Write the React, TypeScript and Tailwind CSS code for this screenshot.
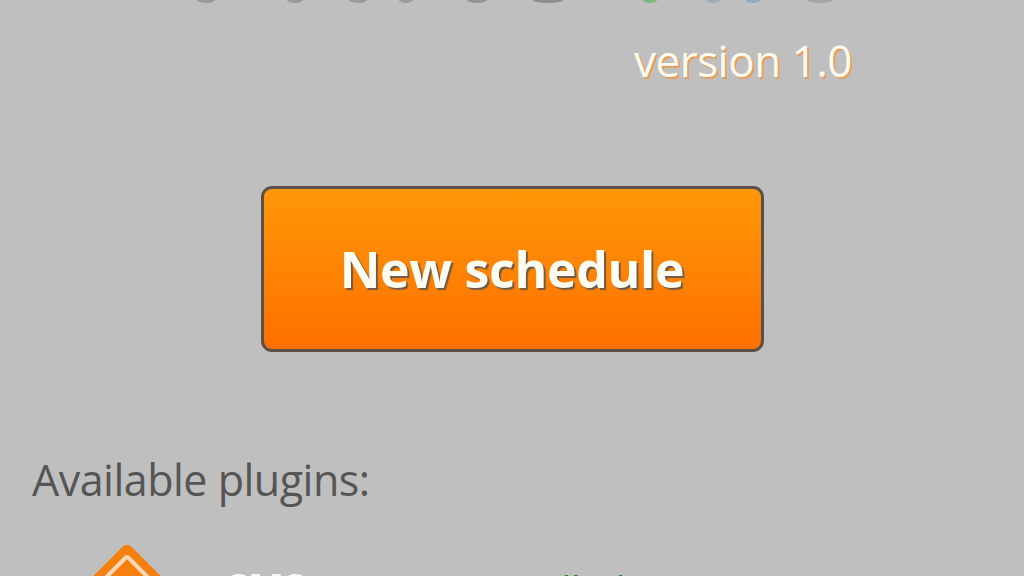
const sans = { fontFamily: '"Open Sans", "Noto Sans", sans-serif' };

// bottoms of the title glyphs, cut off by the top edge of the picture
const titleMarks = [
  [206, 9, "#9a9a9a"],
  [295, 8, "#9c9c9c"],
  [358, 9, "#9c9c9c"],
  [406, 7, "#9c9c9c"],
  [477, 10, "#949494"],
  [548, 15, "#8c8c8c"],
  [650, 7, "#7fb87f"],
  [713, 7, "#9fb0b4"],
  [753, 7, "#93aabb"],
  [820, 13, "#a6a6a6"],
] as const;

function TitleMarks() {
  return (
    <svg width="1024" height="6" viewBox="0 0 1024 6" className="block shrink-0">
      {titleMarks.map(([cx, rx, fill]) => (
        <ellipse key={cx} cx={cx} cy="0" rx={rx} ry="3" fill={fill} />
      ))}
    </svg>
  );
}

function PluginIcon() {
  return (
    <svg width="80" height="80" viewBox="0 0 80 80" className="shrink-0">
      <rect x="14" y="14" width="52" height="52" rx="6" transform="rotate(45 40 40)" fill="#f58010" />
      <rect x="24" y="24" width="32" height="32" rx="2" transform="rotate(45 40 40)" fill="none" stroke="#f8d8b8" strokeWidth="4" />
    </svg>
  );
}

export default function App() {
  return (
    <div className="w-[1024px] h-[576px] overflow-hidden bg-[#bfbfbf] flex flex-col" style={sans}>
      <TitleMarks />

      <div className="flex justify-end pr-[172px] pt-[29px]">
        <span className="text-[44px] leading-[50px] tracking-[-0.5px] text-[#fffaf0] [text-shadow:2px_2px_0_#e0a060]">
          version 1.0
        </span>
      </div>

      <div className="flex justify-center pt-[101px]">
        <button className="w-[503px] h-[166px] rounded-[11px] border-[3px] border-[#5a5048] bg-gradient-to-b from-[#ff9708] to-[#ff6f00] text-[50px] font-bold tracking-[-0.3px] text-[#fffdf2] [text-shadow:2px_2px_1px_#6e5a48]">
          New schedule
        </button>
      </div>

      <div className="pl-[32px] pt-[100px] text-[43px] leading-[56px] tracking-[-0.5px] text-[#555555]">
        Available plugins:
      </div>

      <div className="flex items-start pl-[87px] pt-[31px]">
        <PluginIcon />
        <span className="ml-[60px] pt-[22px] text-[38px] font-bold leading-[50px] text-[#fafafa]">SMS</span>
        <span className="ml-[170px] pt-[25px] text-[38px] leading-[50px] text-[#1f8a1f]">Installed</span>
      </div>
    </div>
  );
}
